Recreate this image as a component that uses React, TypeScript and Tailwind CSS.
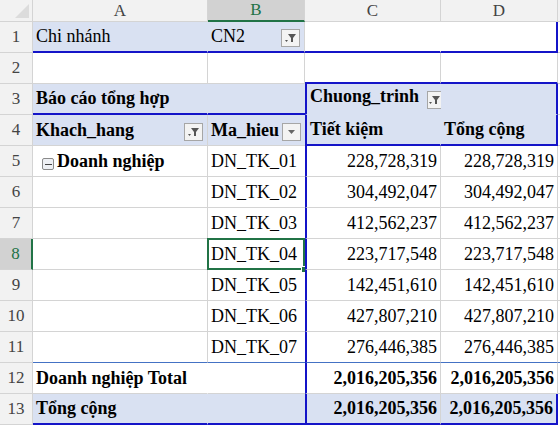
import React from "react";

const FILL = "bg-[#d9e1f2]";

function Filter() {
  return (
    <span className="ml-auto mb-[3px] mr-[1px] w-[19px] h-[18px] border border-[#a6a6a6] bg-[#f3f3f3] flex items-center justify-center shrink-0">
      <svg width="13" height="12" viewBox="0 0 13 12">
        <path d="M4 2h8L9 6v4H7V6z" fill="#555" />
        <path d="M1 8h3L2.5 10z" fill="#555" />
      </svg>
    </span>
  );
}
function Drop() {
  return (
    <span className="ml-auto mb-[3px] mr-[1px] w-[19px] h-[18px] border border-[#a6a6a6] bg-[#f3f3f3] flex items-center justify-center shrink-0">
      <svg width="9" height="6" viewBox="0 0 9 6"><path d="M1 1h7L4.5 5z" fill="#666" /></svg>
    </span>
  );
}

function C({ cls = "", children }: { cls?: string; children?: React.ReactNode }) {
  return (
    <div className={`box-border border-r border-b border-[#d4d4d4] flex items-end px-[3px] pb-[1px] whitespace-nowrap overflow-visible relative ${cls}`}>
      {children}
    </div>
  );
}

function RH({ n, sel }: { n: number; sel?: boolean }) {
  return (
    <div className={`box-border border-r border-b border-[#d4d4d4] flex items-center justify-center text-[17px] ${sel ? "bg-[#d2d2d2] text-[#217346] border-r-2! border-r-[#217346]!" : "bg-[#f2f2f2] text-[#444]"}`}>
      {n}
    </div>
  );
}

const data = [
  ["DN_TK_01", "228,728,319"],
  ["DN_TK_02", "304,492,047"],
  ["DN_TK_03", "412,562,237"],
  ["DN_TK_04", "223,717,548"],
  ["DN_TK_05", "142,451,610"],
  ["DN_TK_06", "427,807,210"],
  ["DN_TK_07", "276,446,385"],
];

const BB = "border-b-2! border-b-[#1414c8]!";
const BL = "border-l-2! border-l-[#1414c8]!";
const BR = "border-r-2! border-r-[#1414c8]!";
const RT = "border-r-transparent!";

export default function App() {
  return (
    <div className="w-[560px] h-[426px] overflow-hidden bg-white text-black text-[18px]" style={{ fontFamily: '"Liberation Serif", "Times New Roman", serif' }}>
      <div className="grid grid-cols-[33px_175px_97px_136px_117px_2px] grid-rows-[22px_repeat(13,31px)]">
        <div className="bg-[#f2f2f2] border-r border-b border-[#d4d4d4] relative">
          <svg className="absolute right-[3px] bottom-[3px]" width="14" height="14"><path d="M14 0V14H0z" fill="#dcdcdc" /></svg>
        </div>
        <div className="bg-[#f2f2f2] border-r border-b border-[#d4d4d4] flex items-center justify-center text-[17px] text-[#444]">A</div>
        <div className="bg-[#d2d2d2] border-r border-[#d4d4d4] border-b-2 border-b-[#217346]! flex items-center justify-center text-[17px] text-[#217346]">B</div>
        <div className="bg-[#f2f2f2] border-r border-b border-[#d4d4d4] flex items-center justify-center text-[17px] text-[#444]">C</div>
        <div className="bg-[#f2f2f2] border-r border-b border-[#d4d4d4] flex items-center justify-center text-[17px] text-[#444]">D</div>
        <div className="bg-[#f2f2f2] border-b border-[#d4d4d4]"></div>

        {/* row 1 */}
        <RH n={1} />
        <C cls={`${FILL} ${BB} ${RT}`}>Chi nhánh</C>
        <C cls={`${FILL} ${BB}`}>CN2<Filter /></C>
        <C cls={`${BB} ${RT}`}></C>
        <C cls={`${BB} ${BR}`}></C>
        <div className="border-b border-[#d4d4d4]" />

        {/* row 2 */}
        <RH n={2} />
        <C></C><C></C><C cls={BB}></C><C cls={BB}></C>
        <div className="border-b border-[#d4d4d4]" />

        {/* row 3 */}
        <RH n={3} />
        <C cls={`${FILL} font-bold ${BB} ${RT}`}>Báo cáo tổng hợp</C>
        <C cls={`${FILL} ${BB} border-r-0!`}></C>
        <C cls={`${FILL} font-bold ${BL} ${RT} border-b-transparent! pb-[4px]`}>Chuong_trinh<span className="ml-[8px] mb-[1px] w-[19px] h-[18px] border border-[#a6a6a6] bg-[#f3f3f3] flex items-center justify-center"><svg width="13" height="12" viewBox="0 0 13 12"><path d="M4 2h8L9 6v4H7V6z" fill="#555" /><path d="M1 8h3L2.5 10z" fill="#555" /></svg></span></C>
        <C cls={`${FILL} ${BR} border-b-transparent!`}></C>
        <div className="border-b border-[#d4d4d4]" />

        {/* row 4 */}
        <RH n={4} />
        <C cls={`${FILL} font-bold`}>Khach_hang<Filter /></C>
        <C cls={`${FILL} font-bold border-r-0!`}>Ma_hieu<Drop /></C>
        <C cls={`${FILL} font-bold ${BL} ${RT} ${BB}`}>Tiết kiệm</C>
        <C cls={`${FILL} font-bold ${BR} ${BB}`}>Tổng cộng</C>
        <div className="border-b border-[#d4d4d4]" />

        {data.map(([code, v], i) => {
          const n = i + 5;
          const last = n === 11;
          const bb = last ? "border-b-[#4472c4]!" : "";
          return (
            <React.Fragment key={n}>
              <RH n={n} sel={n === 8} />
              <C cls={bb}>
                {n === 5 && (
                  <span className="flex items-end font-bold pl-[6px]">
                    <span className="w-[12px] h-[12px] mb-[5px] mr-[3px] border border-[#8a8a8a] rounded-[2px] bg-[#eef0f4] flex items-center justify-center">
                      <span className="w-[7px] h-[1px] bg-[#444]" />
                    </span>
                    Doanh nghiệp
                  </span>
                )}
              </C>
              <C cls={`${bb} border-r-0!`}>
                {code}
                {n === 8 && (
                  <>
                    <span className="absolute -left-[1px] -top-[1px] right-0 -bottom-[1px] border-2 border-[#217346] pointer-events-none" />
                    <span className="absolute -right-[3px] -bottom-[4px] w-[7px] h-[7px] bg-[#217346] border border-white" />
                  </>
                )}
              </C>
              <C cls={`justify-end ${BL} ${bb}`}>{v}</C>
              <C cls={`justify-end ${bb}`}>{v}</C>
              <div className={`border-b border-[#d4d4d4] ${bb}`} />
            </React.Fragment>
          );
        })}

        {/* row 12 */}
        <RH n={12} />
        <C cls={`font-bold ${RT}`}>Doanh nghiệp Total</C>
        <C cls="border-r-0!"></C>
        <C cls={`justify-end font-bold ${BL}`}>2,016,205,356</C>
        <C cls="justify-end font-bold">2,016,205,356</C>
        <div className="border-b border-[#d4d4d4]" />

        {/* row 13 */}
        <RH n={13} />
        <C cls={`${FILL} font-bold ${BB} ${RT}`}>Tổng cộng</C>
        <C cls={`${FILL} ${BB} border-r-0!`}></C>
        <C cls={`${FILL} justify-end font-bold ${BL} ${BB}`}>2,016,205,356</C>
        <C cls={`${FILL} justify-end font-bold ${BB} ${BR}`}>2,016,205,356</C>
        <div />
      </div>
    </div>
  );
}
